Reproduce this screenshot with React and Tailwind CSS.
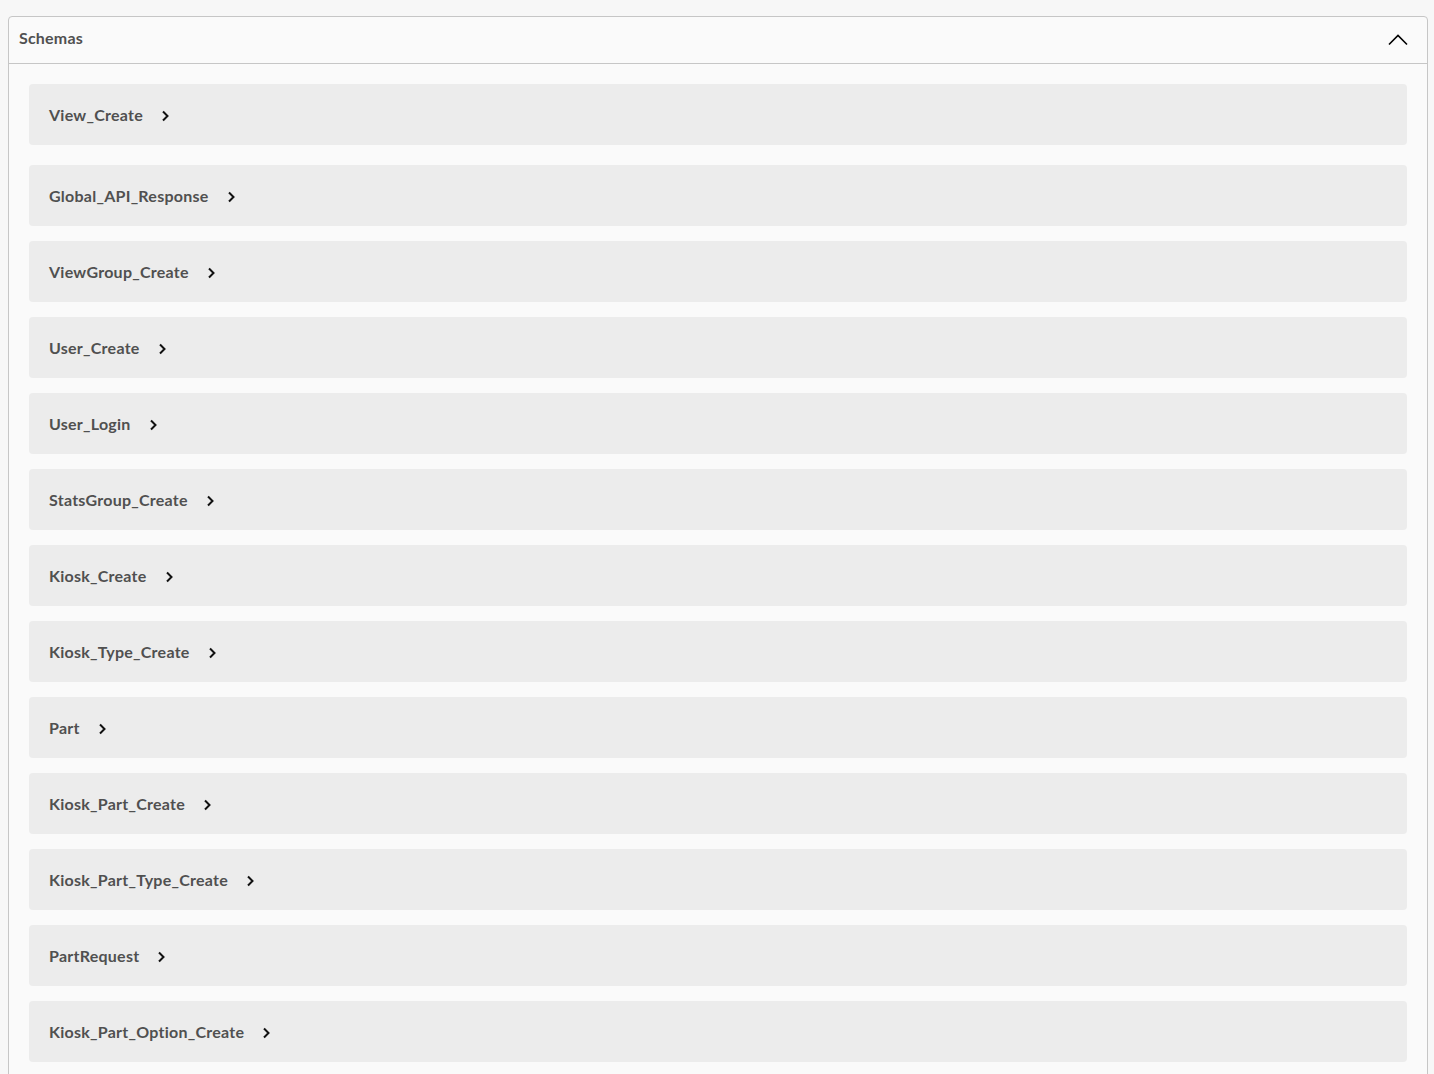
import * as React from "react";

const schemas = [
  "View_Create",
  "Global_API_Response",
  "ViewGroup_Create",
  "User_Create",
  "User_Login",
  "StatsGroup_Create",
  "Kiosk_Create",
  "Kiosk_Type_Create",
  "Part",
  "Kiosk_Part_Create",
  "Kiosk_Part_Type_Create",
  "PartRequest",
  "Kiosk_Part_Option_Create",
];

function Chevron() {
  return (
    <svg width="10" height="12" viewBox="0 0 10 12" className="ml-[18px] mt-[3px] shrink-0">
      <path d="M2 1.5 L6.5 6 L2 10.5" fill="none" stroke="#111" strokeWidth="2" />
    </svg>
  );
}

export default function App() {
  return (
    <div className="min-h-[1074px] bg-[#f7f7f7] pt-4 pl-2 pr-[6px] font-['Lato',sans-serif] overflow-hidden h-[1074px]">
      <section className="bg-[#fafafa] border border-[#c6c6c6] rounded-[4px] pb-10">
        {/* header */}
        <div className="flex items-center justify-between h-[47px] pl-[10px] pr-[19px] pb-[4px] border-b border-[#c6c6c6]">
          <h4 className="text-[16px] font-bold text-[#505050] tracking-[0.2px]">Schemas</h4>
          <svg width="20" height="20" viewBox="0 0 20 20" className="mt-[3px]">
            <path d="M1 14.5 L10 5.5 L19 14.5" fill="none" stroke="#000" strokeWidth="1.6" />
          </svg>
        </div>
        {/* models */}
        <div className="pt-5 flex flex-col gap-[15px] px-5">
          {schemas.map((name, i) => (
            <div
              key={i}
              className={"flex items-center h-[61px] bg-[#ececec] rounded-[4px] px-5" + (i === 1 ? " mt-[5px]" : "")}
            >
              <span className="text-[16px] font-bold text-[#505050] tracking-[0.25px]">{name}</span>
              <Chevron />
            </div>
          ))}
        </div>
      </section>
    </div>
  );
}
